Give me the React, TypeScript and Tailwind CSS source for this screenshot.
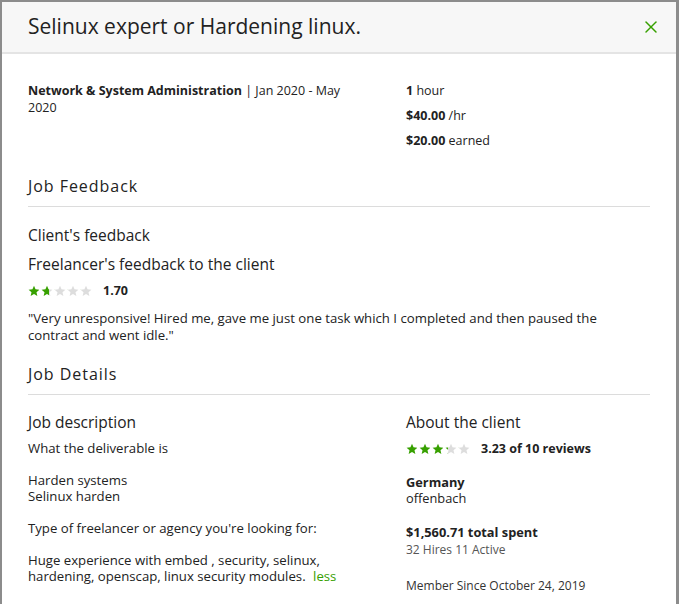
import { X } from "lucide-react"

function Star({ fill, id }: { fill: number; id: string }) {
  // fill 0–1
  return (
    <svg width="12" height="12" viewBox="0 0 24 24" className="shrink-0">
      <defs>
        <linearGradient id={id}>
          <stop offset={`${fill * 100}%`} stopColor="#37a000" />
          <stop offset={`${fill * 100}%`} stopColor="#dddddd" />
        </linearGradient>
      </defs>
      <path
        d="M12 1.5l3.1 7.1 7.7.7-5.8 5.1 1.7 7.6L12 18l-6.7 4 1.7-7.6-5.8-5.1 7.7-.7z"
        fill={`url(#${id})`}
      />
    </svg>
  )
}

function Stars({ value, name }: { value: number; name: string }) {
  return (
    <div className="flex items-center gap-[1px]">
      {[0, 1, 2, 3, 4].map((i) => (
        <Star key={i} id={`${name}-${i}`} fill={Math.max(0, Math.min(1, value - i))} />
      ))}
    </div>
  )
}

function Section({ title }: { title: string }) {
  return (
    <div className="border-b border-[#dcdcdc] pb-[10px] text-[16px] leading-5 tracking-[0.06em] text-[#222]">
      {title}
    </div>
  )
}

export default function App() {
  return (
    <div
      className="h-[604px] w-[679px] overflow-hidden bg-white text-[#222]"
      style={{ fontFamily: '"Open Sans", "Liberation Sans", sans-serif' }}
    >
      <div className="h-full border-l-2 border-r-[3px] border-t-2 border-[#8c8c8c]">
        {/* Header */}
        <div className="flex h-[52px] items-center justify-between border-b-2 border-[#e4e4e4] bg-[#f7f7f7] pl-[26px] pr-[15px]">
          <h1 className="text-[21px] text-[#222]">Selinux expert or Hardening linux.</h1>
          <X className="h-5 w-5 text-[#37a000]" strokeWidth={1.8} />
        </div>

        <div className="px-[26px]">
          {/* Summary */}
          <div className="flex pt-[28px] text-[12.5px] leading-[17px]">
            <div className="w-[378px] pr-[40px]">
              <span className="font-bold">Network &amp; System Administration</span> | Jan 2020 - May 2020
            </div>
            <div className="flex flex-col gap-2">
              <div><span className="font-bold">1</span> hour</div>
              <div><span className="font-bold">$40.00</span> /hr</div>
              <div><span className="font-bold">$20.00</span> earned</div>
            </div>
          </div>

          {/* Job Feedback */}
          <div className="mt-[27px]">
            <Section title="Job Feedback" />
          </div>
          <div className="mt-[18px] text-[15.5px] leading-5">Client's feedback</div>
          <div className="mt-[9px] text-[15.5px] leading-5">Freelancer's feedback to the client</div>
          <div className="mt-[8px] flex items-center">
            <Stars value={1.7} name="fb" />
            <span className="ml-[11px] text-[12.5px] font-bold">1.70</span>
          </div>
          <p className="mt-[9px] pr-[40px] text-[13.2px] leading-[17px]">
            "Very unresponsive! Hired me, gave me just one task which I completed and then paused the contract and went idle."
          </p>

          {/* Job Details */}
          <div className="mt-[20px]">
            <Section title="Job Details" />
          </div>
          <div className="flex pt-[17px]">
            <div className="w-[378px] pr-[30px]">
              <div className="text-[15.5px] leading-5">Job description</div>
              <div className="mt-[8px] text-[13.2px] leading-[16px]">
                <p>What the deliverable is</p>
                <p className="mt-4">Harden systems<br />Selinux harden</p>
                <p className="mt-4">Type of freelancer or agency you're looking for:</p>
                <p className="mt-4">
                  Huge experience with embed , security, selinux, hardening, openscap, linux security modules.{" "}
                  <span className="ml-1 text-[#37a000]">less</span>
                </p>
              </div>
            </div>
            <div className="flex-1">
              <div className="text-[15.5px] leading-5">About the client</div>
              <div className="mt-[8px] flex items-center">
                <Stars value={3.23} name="cl" />
                <span className="ml-[11px] text-[12.5px] font-bold">3.23 of 10 reviews</span>
              </div>
              <div className="mt-[15px] text-[12.8px] leading-4">
                <div className="font-bold">Germany</div>
                <div>offenbach</div>
              </div>
              <div className="mt-[18px] leading-4">
                <div className="text-[12.8px] font-bold">$1,560.71 total spent</div>
                <div className="mt-[2px] text-[12px] text-[#555]">32 Hires 11 Active</div>
              </div>
              <div className="mt-[19px] text-[12px] text-[#333]">Member Since October 24, 2019</div>
            </div>
          </div>
        </div>
      </div>
    </div>
  )
}
